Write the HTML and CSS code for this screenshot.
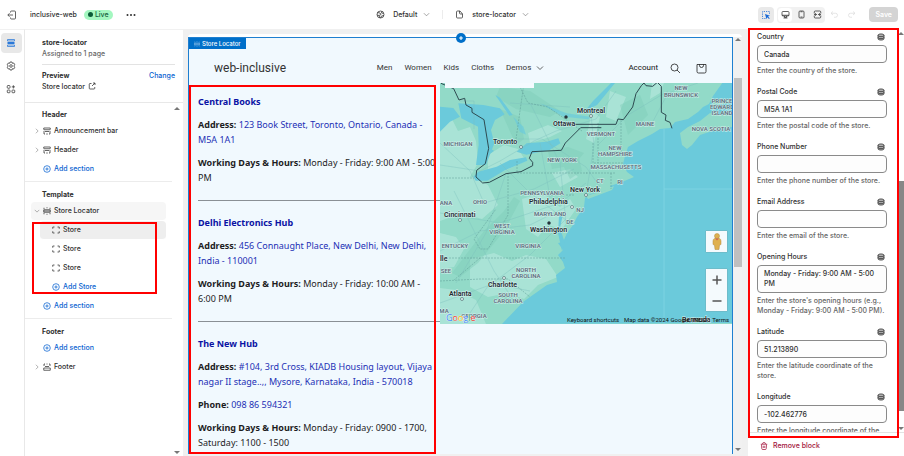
FILE: index.html
```html
<!DOCTYPE html>
<html lang="en">
<head>
<meta charset="utf-8">
<title>inclusive-web · store-locator</title>
<link rel="stylesheet" href="styles.css">
</head>
<body>
<svg class="defs" aria-hidden="true">
  <symbol id="plus" viewBox="0 0 16 16"><circle cx="8" cy="8" r="6.6"/><path d="M8 4.8v6.4M4.8 8h6.4"/></symbol>
  <symbol id="right" viewBox="0 0 16 16"><path d="M5 2l6 6-6 6"/></symbol>
  <symbol id="down" viewBox="0 0 16 16"><path d="M2 5l6 6 6-6"/></symbol>
  <symbol id="section" viewBox="0 0 16 16"><path d="M1.5 5V2h13v3M1.5 5.500h13M4 9h8M2 8v6h2M14 8v6h-2M6.500 14h3"/></symbol>
  <symbol id="middle" viewBox="0 0 16 16"><path d="M2 4V1.500M6 1.500h1M9 1.500h1M14 4V1.500M1.500 5.500h13v5h-13zM1.500 8h13M2 12v2.500M6 14.500h1M9 14.500h1M14 12v2.500"/></symbol>
  <symbol id="foot" viewBox="0 0 16 16"><path d="M2 6V2h2M7 2h2M12 2h2v4M4 7h8M1.500 10h13v4.500h-13z"/></symbol>
  <symbol id="block" viewBox="0 0 16 16"><path d="M1.500 5.500V2h3.500M11 2h3.500v3.500M14.500 10.500V14H11M5 14H1.500v-3.500"/></symbol>
  <symbol id="data" viewBox="0 0 16 16"><path class="tint" d="M2 4.500C2 1 14 1 14 4.500v7c0 3.500-12 3.500-12 0z"/><path d="M2 5c0 3 12 3 12 0M2 9c0 3 12 3 12 0"/></symbol>
</svg>
<div class="app">
  <header class="topbar">
    <div class="top-left">
      <button class="icon-btn" aria-label="Exit"><svg class="i10" viewBox="0 0 20 20"><path d="M7 5V4q0-2 2-2h6q2 0 2 2v12q0 2-2 2H9q-2 0-2-2v-1M12 10H2M5 6.500L1.500 10 5 13.500"/></svg></button>
      <span class="shop">inclusive-web</span>
      <span class="live">Live</span>
      <button class="icon-btn" aria-label="More"><svg class="i10 solid" viewBox="0 0 20 20"><circle cx="3" cy="10" r="2"/><circle cx="10" cy="10" r="2"/><circle cx="17" cy="10" r="2"/></svg></button>
    </div>
    <div class="top-mid">
      <button class="picker"><svg class="i9" viewBox="0 0 18 18"><circle cx="9" cy="9" r="7"/><path d="M3 5l5 1 2 3-4 2-4-1M12 2.500L11 6l4 1M9 16l2-4 5-1M6 11l2 5"/></svg>Default<svg class="i7 soft" viewBox="0 0 16 16"><use href="#down"/></svg></button>
      <span class="split"></span>
      <button class="picker"><svg class="i9" viewBox="0 0 18 18"><path d="M10 2H5Q3 2 3 4v10q0 2 2 2h8q2 0 2-2V8zM9 2v4q0 2 2 2h4"/></svg>store-locator<svg class="i7 soft" viewBox="0 0 16 16"><use href="#down"/></svg></button>
    </div>
    <div class="top-right">
      <div class="seg inspect"><button class="icon-btn blue" aria-label="Inspector"><svg class="i10" viewBox="0 0 20 20"><path stroke-dasharray="2.500 2" d="M9 17H3V3h14v6"/><path class="fill" d="M8 8l10 3.500-4 1.500 3.500 3.500-1.500 1.500-3.500-3.500-1.500 4z"/></svg></button></div>
      <div class="seg">
        <button class="icon-btn on" aria-label="Desktop"><svg class="i9" viewBox="0 0 18 18"><rect x="2" y="3" width="14" height="9" rx="2"/><path d="M2 10.500h14M7 12v3h4v-3M5 16h8"/></svg></button>
        <button class="icon-btn" aria-label="Mobile"><svg class="i9" viewBox="0 0 18 18"><rect x="4" y="2" width="10" height="14" rx="2"/><path d="M7 3.500h4M7 14h4"/></svg></button>
        <button class="icon-btn" aria-label="Full screen"><svg class="i9" viewBox="0 0 18 18"><path d="M2.500 7V4q0-2 2-2h9q2 0 2 2v3M2.500 11v3q0 2 2 2h9q2 0 2-2v-3M3 9h5M10 9h5M6 6.500L3 9l3 2.500M12 6.500L15 9l-3 2.500"/></svg></button>
      </div>
      <button class="icon-btn off" aria-label="Undo" disabled><svg class="i9" viewBox="0 0 18 18"><path d="M6 3L2 6.500 6 10M2 6.500h9q4 0 4 4t-4 4H8"/></svg></button>
      <button class="icon-btn off" aria-label="Redo" disabled><svg class="i9" viewBox="0 0 18 18"><path d="M12 3l4 3.500-4 3.500M16 6.500H7q-4 0-4 4t4 4h3"/></svg></button>
      <button class="save" disabled>Save</button>
    </div>
  </header>

  <div class="work">
    <nav class="rail" aria-label="Editor">
      <button class="rail-btn on" aria-label="Sections"><svg class="i10" viewBox="0 0 20 20"><path d="M3 6V3h14v3M3 14v3h14v-3"/><path class="fill" d="M3 8h14v4H3z"/><path d="M3 6h14M3 14h14"/></svg></button>
      <button class="rail-btn" aria-label="Theme settings"><svg class="i10" viewBox="0 0 20 20"><path d="M8 2h4l.8 2.600 2.700-.6 2 3.500L15.600 10l1.900 2.500-2 3.500-2.700-.6L12 18H8l-.8-2.600-2.700.6-2-3.500L4.400 10 2.500 7.500l2-3.500 2.700.6z"/><circle cx="10" cy="10" r="2.600"/></svg></button>
      <button class="rail-btn" aria-label="Apps"><svg class="i10" viewBox="0 0 20 20"><rect x="2.500" y="3" width="5.500" height="5.500" rx="1.500"/><rect x="2.500" y="12" width="5.500" height="5.500" rx="1.500"/><rect x="12" y="12" width="5.500" height="5.500" rx="1.500"/><path d="M14.700 2.500v6.500M11.500 5.700H18"/></svg></button>
    </nav>

    <aside class="sidebar">
      <div class="summary">
        <h1>store-locator</h1>
        <p class="muted">Assigned to 1 page</p>
        <div class="preview-row"><strong>Preview</strong><a href="#change">Change</a></div>
        <p>Store locator <svg class="i8 ext" viewBox="0 0 16 16"><path d="M7 3H4Q2.500 3 2.500 4.500v8Q2.500 14 4 14h8q1.500 0 1.500-1.500V10M10 2h4v4M14 2L8 8"/></svg></p>
      </div>
      <div class="tree">
        <section>
          <h2>Header</h2>
          <button class="row"><svg class="i6 soft"><use href="#right"/></svg><svg class="i8"><use href="#section"/></svg>Announcement bar</button>
          <button class="row"><svg class="i6 soft"><use href="#right"/></svg><svg class="i8"><use href="#section"/></svg>Header</button>
          <button class="row add"><svg class="i8"><use href="#plus"/></svg>Add section</button>
        </section>
        <section>
          <h2>Template</h2>
          <button class="row open"><svg class="i6 soft"><use href="#down"/></svg><svg class="i8"><use href="#middle"/></svg>Store Locator</button>
          <div class="blocks">
            <button class="row on"><svg class="i8"><use href="#block"/></svg>Store</button>
            <button class="row"><svg class="i8"><use href="#block"/></svg>Store</button>
            <button class="row"><svg class="i8"><use href="#block"/></svg>Store</button>
            <button class="row addb"><svg class="i8"><use href="#plus"/></svg>Add Store</button>
          </div>
          <button class="row add"><svg class="i8"><use href="#plus"/></svg>Add section</button>
        </section>
        <section>
          <h2>Footer</h2>
          <button class="row add"><svg class="i8"><use href="#plus"/></svg>Add section</button>
          <button class="row"><svg class="i6 soft"><use href="#right"/></svg><svg class="i8"><use href="#foot"/></svg>Footer</button>
        </section>
      </div>
      <span class="arrow up side-up"></span><span class="arrow down side-down"></span>
    </aside>

    <main class="stage">
      <div class="frame">
        <div class="site">
          <span class="tag"><svg class="i6"><use href="#middle"/></svg>Store Locator</span>
          <button class="insert" aria-label="Add section above"><svg class="i6" viewBox="0 0 16 16"><path d="M8 3v10M3 8h10"/></svg></button>
          <div class="site-head">
            <a class="brand" href="#home">web-inclusive</a>
            <nav class="menu"><a href="#men">Men</a><a href="#women">Women</a><a href="#kids">Kids</a><a href="#cloths">Cloths</a><a href="#demos">Demos <svg class="i8"><use href="#down"/></svg></a></nav>
            <div class="tools">
              <a href="#account">Account</a>
              <button class="icon-btn" aria-label="Search"><svg class="i11" viewBox="0 0 22 22"><circle cx="9" cy="9" r="7"/><path d="M14 14l6 6"/></svg></button>
              <button class="icon-btn" aria-label="Cart"><svg class="i11" viewBox="0 0 22 22"><path d="M2 3h18v14q0 3-3 3H5q-3 0-3-3zM7 3v2q0 4 4 4t4-4V3"/></svg></button>
            </div>
          </div>
          <div class="locator">
            <div class="stores">
              <article>
                <h3>Central Books</h3>
                <p><b>Address:</b> <a href="#m1">123 Book Street, Toronto, Ontario, Canada - M5A 1A1</a></p>
                <p><b>Working Days &amp; Hours:</b> Monday - Friday: 9:00 AM - 5:00 PM</p>
              </article>
              <article>
                <h3>Delhi Electronics Hub</h3>
                <p><b>Address:</b> <a href="#m2">456 Connaught Place, New Delhi, New Delhi, India - 110001</a></p>
                <p><b>Working Days &amp; Hours:</b> Monday - Friday: 10:00 AM - 6:00 PM</p>
              </article>
              <article>
                <h3>The New Hub</h3>
                <p><b>Address:</b> <a href="#m3">#104, 3rd Cross, KIADB Housing layout, Vijaya nagar II stage..,, Mysore, Karnataka, India - 570018</a></p>
                <p><b>Phone:</b> <a href="#tel">098 86 594321</a></p>
                <p><b>Working Days &amp; Hours:</b> Monday - Friday: 0900 - 1700, Saturday: 1100 - 1500</p>
              </article>
            </div>
            <div class="map">
              <svg class="map-art" viewBox="0 0 292 241" preserveAspectRatio="xMidYMid slice">
                <rect width="292" height="241" fill="#92dac8"/>
                <g fill="#b4e7dc" opacity=".7">
                  <path d="M0 38l12-2 6 12 12-4 6 14 2 22-8 14-30 6zM48 72l16-10 14 4 8 12-22 10-16 4zM88 50l20-8 14 6-12 6-20 6zM0 96l34-2 14 8 10 20-16 14-20-6-22 8zM152 28l8 6-6 26-8-4zM170 8l16 6-10 24-10-4zM0 150l16 4 8 12-10 18-14 2zM30 176l24-6 18 8 14-6 20 4 12 18-20 8-14 14-16-6-20 4-18-10zM0 205l16 2 20 10 10 24H0zM82 116l20-6 18 14 10-8 6 10-14 20-14-4-10 12-12-8zM212 0h12l-4 10-10 6zM112 90l18-4 8 8-18 10z"/>
                </g>
                <g fill="#7fcdb9" opacity=".45">
                  <path d="M60 4l30 4 30 20-10 6-34-8-20-12zM44 148l20-20 10-14 6 4-16 30-26 32-18 14-8-4zM108 68l20-4 16 6-10 12-22 4zM124 84l14-14 4 18-12 8zM60 26l20 8 4 22-8 6zM180 22l20-10 8 20-20 20z"/>
                </g>
                <path fill="#6bcadb" d="M62 241l21-22 7-5 17-12 10-3-1-7 9-7-2-6-5-7 5-5-5-7 5-1 4-9 6-8 4-8 7-10 1-9 5-4 22-5-2-3 12-4 12-5-7-5-4-8 2-8 3-9 10-6 14-7 8-5 10-1 5-6 13-3 10-7 5-5 6-3 4-8 10-14h17v241z"/>
                <path fill="#92dac8" d="M240 50l2 12 5 4 5-4 8-10 15-5 17-3V32l-14 0-8-2-10 8-12 6zM268 12l8 6 16-2v4l-18 2zM146 113l20-6 8-4-2 4-24 9z"/>
                <g transform="translate(-10 -3) scale(.333333)" fill="#6bcadb">
                  <path d="M85 70l75 5 50 10 14 18-29 17-12 30 10 40-25 65-30 0 8-60-2-55-50-25zM30 80l40 4 20 26-30 15-30 30zM130 290l15-15 55-15 40-20 48-8 4 10-70 30-50 30-35 0zM260 215l30-25 60-5 35-10 6 15-32 20-70 14zM196 45l14 8 38 52-10 2zM162 222l20-16 10 6-24 20z"/>
                  <path d="M250 110l30 30 8 24-18-8zM330 70l80 30 70 10-4 8-76-8z" opacity=".7"/>
                </g>
                <path fill="#6bcadb" d="M119 133l4-2-3 14 5 15-3 8-4-18zM145 28l8-10 18-18h4l-18 22z"/>
                <g class="roads">
                  <path d="M0 82l40 6 20-10 34-20 22-10 40-12 20-28M20 18l14 0 0 28M0 60l30 28 14 32 50-14 40-20M14 108l20 40 20 40 20 30M0 168l40-20 50-6 40-20M0 220l50-18 40-30 36-36M16 200l30-50 20-60M60 80l30 30 40 30M78 56l24 0 44 28 14 20M150 22l4 40-8 50M90 20l30 60 6 60M0 130l60 10 60-20 26-20M30 230l20-30 40 8M158 62l30-30 40-24M210 44l18-34 30-10M70 20l60 4M100 60l10 54"/>
                  <path d="M224 46v195M224 106h68" stroke="#83d7e4" stroke-width="1"/>
                </g>
                <g class="state"><path d="M0 95l34 0M77 78v12h70M68 90v42l-20 34-8 0-6-10 22-30M0 175h125M0 198l40-2 28 0 22 18M40 175l-26 22M102 112h32M153 60v20h30M158 40v40M146 90h30M171 90v16M76 56L84 0M80 4l8 16 20 4 34 24M181 37v32"/></g>
                <g class="border" transform="translate(-10 -3) scale(.333333)"><path d="M33 10l38 16 16 34 17-5 4 20 18 10 0 12 36 22 14 86-10 46-26 20-2 20 20 18 20-2 50-26 45-6 35-18 0-10-10-12 8-20 88-4 12-22 46-46h62"/></g>
                <g class="border" transform="translate(145 -3) scale(.333333)"><path d="M-30 133H93l6-16 16 2 28-38 10-40 16-24 8-8 6 8 20 2 14-12 12 12v78l14 8-2 16 14 6 6 18"/></g>
                <g class="city">
                  <text x="53" y="61">Toronto</text><text x="113" y="43">Ottawa</text><text x="137" y="30">Montreal</text><text x="130" y="109">New York</text><text x="89" y="121">Philadelphia</text><text x="4" y="134">Cincinnati</text><text x="90" y="149">Washington</text><text x="0" y="178">lle</text><text x="48" y="204">Charlotte</text><text x="9" y="213">Atlanta</text><text x="242" y="239">Bermuda</text>
                </g>
                <g class="dots"><circle cx="81" cy="64" r="1.500"/><circle cx="151" cy="33" r="1.500"/><circle cx="146" cy="112" r="1.500"/><circle cx="132" cy="124" r="1.500"/><circle cx="20" cy="137" r="1.500"/><circle cx="64" cy="195" r="1.500"/><circle cx="22" cy="216" r="1.500"/><circle class="cap" cx="126" cy="34" r="1.500"/><circle class="cap" cx="109" cy="140" r="1.500"/></g>
                <g class="region">
                  <text x="18" y="63">MICHIGAN</text><text x="122" y="79">NEW YORK</text><text x="102" y="112">PENNSYLVANIA</text><text x="6" y="122">ANA</text><text x="40" y="121">OHIO</text><text x="161" y="53">VERMONT</text><text x="205" y="43">MAINE</text><text x="241" y="7">NEW</text><text x="241" y="14">BRUNSWICK</text><text x="282" y="20">PRINCE</text><text x="282" y="26">EDWARD</text><text x="282" y="32">ISLAND</text><text x="271" y="48">NOVA SCOTIA</text><text x="175" y="67">NEW</text><text x="175" y="73">HAMPSHIRE</text><text x="176" y="86">MASSACHUSETTS</text><text x="160" y="100">CT</text><text x="180" y="101">RI</text><text x="140" y="129">NJ</text><text x="110" y="133">MARYLAND</text><text x="130" y="141">DE</text><text x="62" y="145">WEST</text><text x="62" y="151">VIRGINIA</text><text x="15" y="165">ENTUCKY</text><text x="88" y="165">VIRGINIA</text><text x="6" y="190">SEE</text><text x="86" y="189">NORTH</text><text x="86" y="195">CAROLINA</text><text x="68" y="214">SOUTH</text><text x="68" y="220">CAROLINA</text><text x="4" y="230">MA</text><text x="34" y="235">GEORGIA</text>
                </g>
                <path fill="#f4fafe" d="M5 0h89v5H5z"/>
              </svg>
              <span class="google"><i class="b">G</i><i class="r">o</i><i class="y">o</i><i class="b">g</i><i class="g">l</i><i class="r">e</i></span>
              <div class="map-ctl">
                <button class="tile" aria-label="Street View"><svg class="peg" viewBox="0 0 20 34"><circle cx="10" cy="6" r="5"/><path d="M5 11h10q3 1 3 5v7l-3 1-1 9H6l-1-9-3-1v-7q0-4 3-5z"/><path class="collar" d="M6 11l4 4 4-4z"/></svg></button>
                <div class="zoomer"><button aria-label="Zoom in"><svg class="i10" viewBox="0 0 10 10"><path d="M5 .5v9M.5 5h9"/></svg></button><button aria-label="Zoom out"><svg class="i10" viewBox="0 0 10 10"><path d="M.5 5h9"/></svg></button></div>
              </div>
              <div class="credits"><span>Keyboard shortcuts</span><span>Map data ©2024 Google, INEGI</span><span>Terms</span></div>
            </div>
          </div>
          <span class="mark mark-stores"></span>
        </div>
        <div class="scroll"><span class="arrow up"></span><span class="thumb"></span><span class="arrow down"></span></div>
      </div>
    </main>

    <form class="settings">
      <div class="fields">
        <div class="field"><div class="lab"><label for="country">Country</label><svg class="i8"><use href="#data"/></svg></div><input id="country" value="Canada"><p>Enter the country of the store.</p></div>
        <div class="field"><div class="lab"><label for="postal">Postal Code</label><svg class="i8"><use href="#data"/></svg></div><input id="postal" value="M5A 1A1"><p>Enter the postal code of the store.</p></div>
        <div class="field"><div class="lab"><label for="phone">Phone Number</label><svg class="i8"><use href="#data"/></svg></div><input id="phone"><p>Enter the phone number of the store.</p></div>
        <div class="field"><div class="lab"><label for="email">Email Address</label><svg class="i8"><use href="#data"/></svg></div><input id="email"><p>Enter the email of the store.</p></div>
        <div class="field"><div class="lab"><label for="hours">Opening Hours</label><svg class="i8"><use href="#data"/></svg></div><textarea id="hours" rows="2">Monday - Friday: 9:00 AM - 5:00 PM</textarea><p>Enter the store's opening hours (e.g., Monday - Friday: 9:00 AM - 5:00 PM).</p></div>
        <div class="field"><div class="lab"><label for="lat">Latitude</label><svg class="i8"><use href="#data"/></svg></div><input id="lat" value="51.213890"><p>Enter the latitude coordinate of the store.</p></div>
        <div class="field"><div class="lab"><label for="lng">Longitude</label><svg class="i8"><use href="#data"/></svg></div><input id="lng" value="-102.462776"><p>Enter the longitude coordinate of the store.</p></div>
      </div>
      <div class="remove"><button type="button"><svg class="i8" viewBox="0 0 16 16"><path d="M1.500 4.500h13M5 4q0-3 3-3t3 3M3 5l.5 8q0 2 2 2h5q2 0 2-2L13 5M6.500 7.500v4.500M9.500 7.500v4.500"/></svg>Remove block</button></div>
      <div class="panel-scroll"><span class="arrow up"></span><span class="thumb"></span><span class="arrow down"></span></div>
      <span class="mark mark-form"></span>
    </form>
  </div>
</div>
</body>
</html>
```
FILE: styles.css
```css
* { box-sizing: border-box; }
body { margin: 0; font: 500 7px/10px Inter, "Liberation Sans", sans-serif; color: #303030; background: #fff; }
h1, h2, h3, p { margin: 0; font-size: inherit; }
button { font: inherit; color: inherit; background: none; border: 0; padding: 0; display: flex; align-items: center; }
a { color: inherit; text-decoration: none; }
svg { fill: none; stroke: currentColor; stroke-width: 1.5; flex: none; display: block; }
.fill { fill: currentColor; stroke: none; }
.tint { fill: #b0b0b0; }
.solid { fill: currentColor; stroke: none; }
.defs { position: absolute; width: 0; height: 0; }
.i6 { width: 6px; height: 6px; }
.i7 { width: 7px; height: 7px; }
.i8 { width: 8px; height: 8px; }
.i9 { width: 9px; height: 9px; }
.i10 { width: 10px; height: 10px; }
.i11 { width: 11px; height: 11px; }
.soft { color: #777; }

.app { height: 100vh; display: flex; flex-direction: column; overflow: hidden; }
.topbar { height: 29px; display: grid; grid-template-columns: 1fr auto 1fr; align-items: center; padding: 0 6px 0 7px; flex: none; }
.top-left, .top-mid, .top-right { display: flex; align-items: center; }
.shop { margin-left: 13px; }
.live { margin: 0 13px 0 7px; background: #a4f7c0; color: #14613c; border-radius: 5px; padding: 0 4px; display: flex; align-items: center; gap: 2px; }
.live::before { content: ""; width: 5px; height: 5px; border-radius: 50%; background: #0a5b37; }
.picker { gap: 8px; }
.picker .i7 { margin-left: -2px; }
.split { width: 1px; height: 9px; background: #ececec; margin: 0 12px; }
.top-right { justify-content: flex-end; }
.seg { display: flex; background: #f1f1f1; border-radius: 4px; margin-right: 3px; }
.seg .icon-btn { width: 16px; height: 16px; justify-content: center; border-radius: 4px; }
.inspect { background: #e9e9e9; }
.blue { color: #1668d6; }
.seg .on { background: #fff; border: 1px solid #f1f1f1; }
.seg:not(.inspect) { margin-right: 5px; }
.off { color: #dcdcdc; margin-right: 8px; }
.save { background: #d4d4d4; color: #fff; border-radius: 4px; height: 15px; padding: 0 6px; font-weight: 600; margin-left: 5px; }

.work { flex: 1; min-height: 0; display: flex; }
.rail { width: 25px; border-right: 1px solid #e8e8e8; padding: 3px 2px 0 0; display: flex; flex-direction: column; align-items: center; gap: 3px; border-top: 1px solid #f1f1f1; }
.rail-btn { width: 21px; height: 20px; justify-content: center; border-radius: 4px; }
.rail-btn.on { background: #e8e8e8; color: #2a78d8; }

.sidebar { width: 158px; position: relative; border-top: 1px solid #f1f1f1; }
.summary { padding: 7px 8px 10px 17px; border-bottom: 1px solid #e8e8e8; line-height: 11px; }
.summary h1 { font-weight: 700; }
.muted { color: #666; }
.preview-row { display: flex; justify-content: space-between; margin-top: 5px; padding-top: 5px; border-top: 1px solid #e3e3e3; }
.preview-row strong, .tree h2 { font-weight: 700; }
.preview-row a, .add, .addb { color: #0a63d1; }
.ext { display: inline-block; margin-left: 1px; vertical-align: -1px; }
.tree section { margin-right: 11px; padding: 4px 6px 2px; border-bottom: 1px solid #ececec; }
.tree section + section { padding-top: 5px; }
.tree section:last-child { border: 0; }
.tree h2 { padding-left: 11px; line-height: 15px; }
.row { width: 100%; height: 19px; gap: 3px; padding-left: 3px; border-radius: 4px; border-bottom: 1px solid #fff; }
.add { padding-left: 12px; }
.open { background: #f6f6f6; }
.blocks { position: relative; padding-left: 9px; }
.blocks .row { padding-left: 12px; }
.blocks .on { background: #eee; }
.blocks::after { content: ""; position: absolute; inset: 1px 9px 3px 1px; border: 2px solid #f00; }
.arrow { width: 0; height: 0; border: 3px solid transparent; }
.arrow.up { border-bottom-color: #777; border-top: 0; }
.arrow.down { border-top-color: #777; border-bottom: 0; }
.side-up { position: absolute; top: 77px; right: 3px; }
.side-down { position: absolute; bottom: 2px; right: 3px; }

.stage { flex: 1; min-width: 0; background: #f0f0f0; padding: 5px 6px 2px 5px; }
.frame { height: 100%; display: flex; background: #fff; padding-top: 3px; border-radius: 4px; }
.site { flex: 1; min-width: 0; position: relative; background: #f1f9fe; border: 1px solid #1f7fd0; border-bottom: 0; color: #222; }
.tag { position: absolute; top: 0; left: 0; display: flex; align-items: center; gap: 2px; padding: 0 5px; background: #006fc9; color: #fff; height: 11px; font-size: 6px; }
.tag svg { opacity: .6; }
.insert { position: absolute; top: -5px; left: 50%; margin-left: -5px; width: 10px; height: 10px; border-radius: 50%; background: #006fc9; color: #fff; justify-content: center; }
.insert svg { stroke-width: 3; }
.site-head { height: 45px; padding: 15px 25px 0; display: grid; grid-template-columns: 1fr auto 1fr; align-items: center; font: 400 8px/12px Roboto, sans-serif; color: #333; }
.brand { font-size: 12px; line-height: 16px; }
.menu { display: flex; gap: 12px; }
.menu a { display: flex; align-items: center; gap: 5px; }
.tools { display: flex; align-items: center; justify-content: flex-end; gap: 12px; color: #111; }
.tools .icon-btn { margin-right: 3px; }
.tools .icon-btn:last-child { margin-right: 0; }
.locator { display: grid; grid-template-columns: 251fr 292fr; align-items: start; }
.stores { min-width: 0; padding: 11px 0 0 9px; font: 400 9px/15px "Noto Sans", sans-serif; color: #1d1d1f; }
.stores h3 { line-height: 15px; font-weight: 700; color: #0a13a4; }
.stores a { color: #2330b5; }
.stores p { margin-top: 8px; }
.stores article + article { border-top: 1px solid #8a9095; margin-top: 15px; padding-top: 14px; }

.map { position: relative; overflow: hidden; }
.map-art { width: 100%; height: auto; stroke: none; }
.roads { fill: none; stroke: #7cc1bf; stroke-width: .5; opacity: .8; }
.state { fill: none; stroke: #5c9a95; stroke-width: .5; stroke-dasharray: 2 1; }
.border { fill: none; stroke: #2d4a50; stroke-width: 3; }
.city { font: 600 7px Roboto, sans-serif; fill: #222c33; stroke: #d9f2ee; stroke-width: 1px; paint-order: stroke; }
.dots { fill: #e8f6f4; stroke: #3f5a60; stroke-width: .6; }
.dots .cap { fill: #222c33; }
.region { font: 600 6px Roboto, sans-serif; fill: #5a6b7b; stroke: #d3f0ea; stroke-width: 1px; paint-order: stroke; text-anchor: middle; }
.google { position: absolute; left: 6px; bottom: 0; font: 500 9px/12px "Open Sans", sans-serif; text-shadow: 0 0 1px #fff, 0 0 1px #fff; }
.google i { font-style: normal; }
.b { color: #4285f4; } .r { color: #ea4335; } .y { color: #fbbc05; } .g { color: #34a853; }
.map-ctl { position: absolute; right: 5px; bottom: 13px; display: grid; gap: 17px; color: #555; }
.tile, .zoomer { width: 21px; background: #f4fafd; box-shadow: 0 0 1px #777; }
.tile { height: 21px; justify-content: center; }
.peg { width: 10px; height: 17px; fill: #dfb14f; stroke: #b08a43; stroke-width: 1; }
.collar { fill: #d4694a; stroke: none; }
.zoomer button { width: 21px; height: 21px; justify-content: center; }
.zoomer .i10 { stroke-width: 1.5; }
.credits { position: absolute; right: 3px; bottom: 0; display: flex; gap: 5px; font: 400 6px/8px Roboto, sans-serif; color: #111; }
.mark { position: absolute; border: 2px solid #f00; pointer-events: none; }
.mark-stores { top: 47px; left: 0; bottom: 0; width: 247px; }
.scroll { width: 9px; background: #f1f1f1; display: flex; flex-direction: column; align-items: center; padding: 1px 0 3px; }
.scroll .thumb { width: 8px; height: 189px; margin: 37px 0 auto; background: #bfbfbf; }

.settings { width: 156px; position: relative; display: flex; flex-direction: column; color: #303030; }
.fields { flex: 1; min-height: 0; overflow: hidden; padding: 3px 17px 0 9px; border-bottom: 1px solid #e3e3e3; }
.field { margin-bottom: 11px; display: flex; flex-direction: column; gap: 3px; }
.lab { display: flex; justify-content: space-between; align-items: center; padding-right: 2px; }
.field p { color: #666; }
input, textarea { display: block; width: 100%; font: inherit; color: inherit; background: #fdfdfd; border: 1px solid #8a8a8a; border-radius: 4px; padding: 0 6px; height: 18px; outline: 0; resize: none; overflow: hidden; }
textarea { height: 28px; padding-top: 3px; }
.remove { height: 23px; padding: 2px 0 0 12px; display: flex; align-items: center; color: #a3143c; }
.remove button { gap: 5px; }
.panel-scroll { position: absolute; top: 3px; right: 0; bottom: 26px; width: 7px; display: flex; flex-direction: column; align-items: center; }
.panel-scroll .thumb { width: 7px; height: 230px; margin: auto 0 16px; background: #878787; }
.mark-form { top: -1px; left: 0; right: 5px; bottom: 18px; }
```
